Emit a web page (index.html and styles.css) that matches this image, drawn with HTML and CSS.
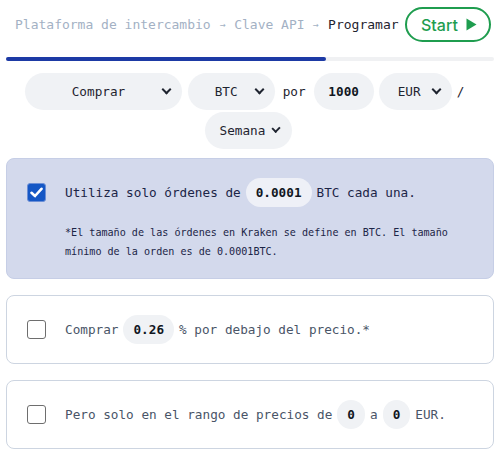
FILE: index.html
```html
<!DOCTYPE html>
<html lang="es">
<head>
  <meta charset="utf-8">
  <title>Programar</title>
  <meta name="viewport" content="width=device-width, initial-scale=1">
  <link rel="stylesheet" href="styles.css">
</head>
<body>

<!-- cabecera con pasos -->
<div class="header">
  <div class="crumbs">
    <span class="crumb">Plataforma de intercambio</span>
    <span class="arrow">→</span>
    <span class="crumb">Clave API</span>
    <span class="arrow">→</span>
    <span class="crumb current">Programar</span>
  </div>
  <button class="start">Start
    <svg width="11" height="13" viewBox="0 0 11 13"><path d="M0.5 0.5 L10.5 6.5 L0.5 12.5 Z" fill="#1f9d4f"/></svg>
  </button>
</div>

<div class="progress"><div class="progress-fill"></div></div>

<!-- plan -->
<div class="plan">
  <div class="pill-select sel-side">Comprar <span class="chev"></span></div>
  <div class="pill-select sel-coin">BTC <span class="chev"></span></div>
  <span class="word">por</span>
  <div class="pill-input amount">1000</div>
  <div class="pill-select sel-fiat">EUR <span class="chev"></span></div>
  <span class="word slash">/</span>
  <div class="pill-select sel-period">Semana <span class="chev"></span></div>
</div>

<div class="card active">
  <div class="row">
    <span class="check on">
      <svg width="13" height="11" viewBox="0 0 13 11"><path d="M1.5 5.8 L5 9 L11.5 1.8" fill="none" stroke="#fff" stroke-width="2.6" stroke-linecap="round" stroke-linejoin="round"/></svg>
    </span>
    <span class="text">Utiliza solo órdenes de<span class="pill-input small">0.0001</span>BTC cada una.</span>
  </div>
  <p class="note">*El tamaño de las órdenes en Kraken se define en BTC. El tamaño mínimo de la orden es de 0.0001BTC.</p>
</div>

<div class="card">
  <div class="row">
    <span class="check"></span>
    <span class="text">Comprar<span class="pill-input small">0.26</span>% por debajo del precio.*</span>
  </div>
</div>

<div class="card">
  <div class="row">
    <span class="check"></span>
    <span class="text">Pero solo en el rango de precios de<span class="pill-input small">0</span>a<span class="pill-input small">0</span>EUR.</span>
  </div>
</div>

</body>
</html>
```

FILE: styles.css
```css
/* base */
body {
  margin: 0;
  padding: 0 6px;
  background-color: #fff;
  color: #1f2430;
  font-family: "DejaVu Sans Mono", "Liberation Mono", monospace;
  font-size: 12.7px;
}

.header {
  display: flex;
  align-items: center;
  justify-content: space-between;
  height: 35px;
  padding: 7px 3px 0 9px;
}

.crumbs {
  color: #a3b1c4;
  white-space: nowrap;
  font-size: 13px;
}

.arrow {
  display: inline-block;
  transform: scale(0.75);
}

.crumb.current {
  color: #1f2430;
}

.start {
  display: flex;
  align-items: center;
  gap: 8px;
  height: 35px;
  width: 86px;
  padding: 0 0 0 14px;
  border: 2px solid #1f9d4f;
  border-radius: 18px;
  background-color: #fff;
  color: #1f9d4f;
  font-family: Inter, "Noto Sans", sans-serif;
  font-size: 16px;
  font-weight: 500;
}

/* barra de progreso */
.progress {
  margin-top: 15px;
  height: 4px;
  border-radius: 2px;
  background-color: #f0f1f3;
}

.progress-fill {
  width: 320px;
  height: 4px;
  border-radius: 2px;
  background-color: #1d3aa5;
}

/* fila del plan */
.plan {
  display: flex;
  flex-wrap: wrap;
  justify-content: center;
  align-items: center;
  column-gap: 5px;
  row-gap: 2px;
  margin: 12px 0 0 0;
  padding: 0 22px 0 18px;
  color: #1f2430;
}

.pill-select {
  display: flex;
  align-items: center;
  justify-content: space-between;
  height: 37px;
  border-radius: 19px;
  background-color: #f0f2f5;
  box-sizing: border-box;
  padding: 0 12px 0 16px;
}

.chev {
  width: 5px;
  height: 5px;
  border-right: 2px solid #1f2430;
  border-bottom: 2px solid #1f2430;
  transform: rotate(45deg);
  margin-top: -4px;
  margin-left: 8px;
}

.sel-side { width: 157px; padding-left: 47px; margin-right: 1px; }
.sel-coin { width: 87px; padding-left: 27px; }
.sel-fiat { width: 73px; padding-left: 19px; }
.sel-period { width: 87px; padding-left: 15px; }

.word {
  padding: 0 3px;
}

.word.slash {
  padding: 0 7px 0 0;
}

.pill-input {
  display: inline-flex;
  align-items: center;
  justify-content: center;
  height: 37px;
  border-radius: 19px;
  background-color: #f0f2f5;
  color: #11161f;
  font-weight: bold;
}

.amount {
  width: 60px;
}

/* tarjetas */
.card {
  margin-top: 16px;
  border: 1px solid #cdd5e1;
  border-radius: 8px;
  padding: 19px 20px;
  color: #4a5568;
}

.plan + .card {
  margin-top: 9px;
}

.card.active {
  background-color: #d3d9ec;
  border-color: #c6cee6;
  color: #1c2547;
  padding-bottom: 17px;
}

.row {
  display: flex;
  align-items: center;
  height: 29px;
}

.check {
  flex: none;
  display: flex;
  align-items: center;
  justify-content: center;
  width: 19px;
  height: 19px;
  box-sizing: border-box;
  border: 1.5px solid #6e6e6e;
  border-radius: 3px;
  margin-right: 19px;
}

.check.on {
  background-color: #1557c5;
  border: 1px solid #6c8fd6;
}

.text {
  white-space: nowrap;
}

.pill-input.small {
  height: 29px;
  padding: 0 10px;
  margin: 0 5px;
  border-radius: 15px;
}

.card.active .pill-input.small {
  background-color: #eef0f7;
}

.note {
  margin: 16px 0 0 38px;
  font-size: 10.1px;
  line-height: 19px;
}
```
